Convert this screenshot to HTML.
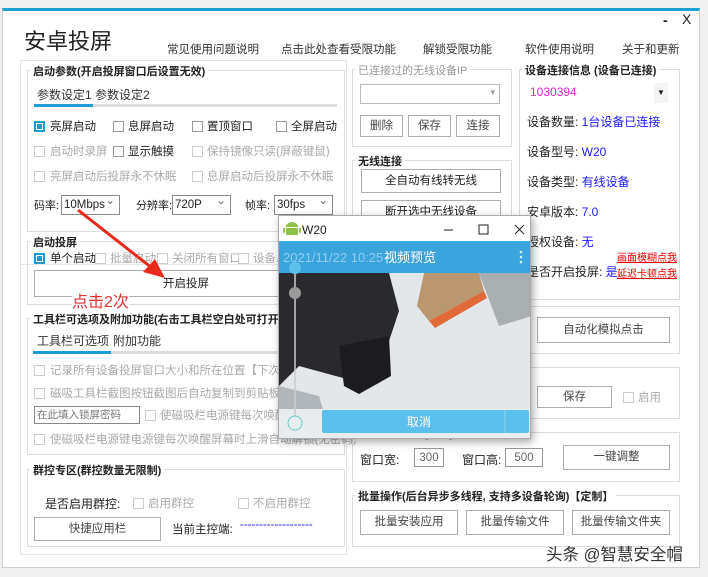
<!DOCTYPE html>
<html><head><meta charset="utf-8"><style>
*{margin:0;padding:0;box-sizing:border-box}
body{width:708px;height:577px;background:#f0f0f0;position:relative;overflow:hidden;font-family:"Liberation Sans","Noto Sans CJK SC",sans-serif;font-size:11.5px;color:#222}
.a{position:absolute;white-space:nowrap}
.win{position:absolute;left:2px;top:8px;width:698px;height:560px;background:#fff;border:1px solid #d0d0d0;border-top:3px solid #1ba1d6}
.g{position:absolute;border:1px solid #dcdcdc}
.gt{position:absolute;background:#fff;padding:0 3px;font-weight:bold;font-size:11px;color:#222;white-space:nowrap}
.cb{position:absolute;width:11px;height:11px;border:1px solid #999;background:#fff}
.cb.on{background:#1e9bd6;border:2px solid #1e9bd6;box-shadow:inset 0 0 0 1px #fff}
.cb.d{border-color:#ccc}
.gray{color:#aaa}
.btn{position:absolute;border:1px solid #adadad;background:#fff;text-align:center;color:#444}
.sel{position:absolute;border:1px solid #888;background:#fff;padding-left:2px}
.sel:after{content:"⌄";position:absolute;right:4px;top:-4px;color:#666}
.blue{color:#1a1aff}
</style></head><body>
<div class="win"></div>
<div class="a" style="left:24px;top:24px;font-size:22px;color:#222">安卓投屏</div>
<div class="a" style="left:167px;top:41px;color:#333">常见使用问题说明</div>
<div class="a" style="left:281px;top:41px;color:#333">点击此处查看受限功能</div>
<div class="a" style="left:423px;top:41px;color:#333">解锁受限功能</div>
<div class="a" style="left:525px;top:41px;color:#333">软件使用说明</div>
<div class="a" style="left:622px;top:41px;color:#333">关于和更新</div>
<div class="a" style="left:663px;top:12px;font-size:14px;font-weight:bold">-</div>
<div class="a" style="left:682px;top:11px;font-size:14px">X</div>

<div class="g" style="left:20px;top:60px;width:327px;height:205px;border-color:#e6e6e6"></div>
<div class="g" style="left:20px;top:265px;width:327px;height:290px;border-color:#e6e6e6;border-top:none"></div>

<div class="g" style="left:27px;top:70px;width:318px;height:162px"></div>
<div class="gt" style="left:30px;top:63px">启动参数(开启投屏窗口后设置无效)</div>
<div class="a" style="left:37px;top:86px;font-size:12px;color:#333">参数设定1</div>
<div class="a" style="left:95px;top:86px;font-size:12px;color:#333">参数设定2</div>
<div class="a" style="left:34px;top:104px;width:303px;height:3px;background:#ddd"></div>
<div class="a" style="left:34px;top:104px;width:59px;height:3px;background:#1e9bd6"></div>

<div class="cb on" style="left:34px;top:121px"></div><div class="a" style="left:50px;top:118px">亮屏启动</div>
<div class="cb" style="left:113px;top:121px"></div><div class="a" style="left:128px;top:118px">息屏启动</div>
<div class="cb" style="left:192px;top:121px"></div><div class="a" style="left:207px;top:118px">置顶窗口</div>
<div class="cb" style="left:276px;top:121px"></div><div class="a" style="left:291px;top:118px">全屏启动</div>
<div class="cb d" style="left:34px;top:146px"></div><div class="a gray" style="left:50px;top:143px">启动时录屏</div>
<div class="cb" style="left:113px;top:146px"></div><div class="a" style="left:128px;top:143px">显示触摸</div>
<div class="cb d" style="left:192px;top:146px"></div><div class="a gray" style="left:207px;top:143px">保持镜像只读(屏蔽键鼠)</div>
<div class="cb d" style="left:34px;top:171px"></div><div class="a gray" style="left:50px;top:168px">亮屏启动后投屏永不休眠</div>
<div class="cb d" style="left:192px;top:171px"></div><div class="a gray" style="left:207px;top:168px">息屏启动后投屏永不休眠</div>
<div class="a" style="left:34px;top:197px;font-size:11px">码率:</div>
<div class="sel" style="left:61px;top:195px;width:59px;height:20px;line-height:18px">10Mbps</div>
<div class="a" style="left:136px;top:197px;font-size:11px">分辨率:</div>
<div class="sel" style="left:172px;top:195px;width:59px;height:20px;line-height:18px">720P</div>
<div class="a" style="left:245px;top:197px;font-size:11px">帧率:</div>
<div class="sel" style="left:274px;top:195px;width:59px;height:20px;line-height:18px">30fps</div>

<div class="g" style="left:27px;top:241px;width:318px;height:64px"></div>
<div class="gt" style="left:30px;top:234px">启动投屏</div>
<div class="cb on" style="left:34px;top:253px"></div><div class="a" style="left:50px;top:250px">单个启动</div>
<div class="cb d" style="left:95px;top:253px"></div><div class="a gray" style="left:110px;top:250px">批量启动</div>
<div class="cb d" style="left:157px;top:253px"></div><div class="a gray" style="left:172px;top:250px">关闭所有窗口</div>
<div class="cb d" style="left:238px;top:253px"></div><div class="a gray" style="left:253px;top:250px">设备...</div>
<div class="btn" style="left:34px;top:270px;width:304px;height:27px;line-height:26px;color:#222">开启投屏</div>
<div class="a" style="left:72px;top:288px;font-size:16px;color:#e03030;background:#fff">点击2次</div>
<svg class="a" style="left:0;top:0" width="708" height="577"><line x1="78" y1="210" x2="152" y2="268" stroke="#e8291c" stroke-width="3"/><polygon points="165,278 143,272 155,259" fill="#e8291c"/></svg>

<div class="g" style="left:27px;top:318px;width:318px;height:137px"></div>
<div class="gt" style="left:30px;top:311px">工具栏可选项及附加功能(右击工具栏空白处可打开附加菜单)</div>
<div class="a" style="left:37px;top:332px;font-size:12px;color:#333">工具栏可选项</div>
<div class="a" style="left:113px;top:332px;font-size:12px;color:#333">附加功能</div>
<div class="a" style="left:33px;top:351px;width:304px;height:3px;background:#ddd"></div>
<div class="a" style="left:33px;top:351px;width:78px;height:3px;background:#1e9bd6"></div>
<div class="cb d" style="left:34px;top:365px"></div><div class="a gray" style="left:50px;top:362px">记录所有设备投屏窗口大小和所在位置【下次启动】</div>
<div class="cb d" style="left:34px;top:388px"></div><div class="a gray" style="left:50px;top:385px">磁吸工具栏截图按钮截图后自动复制到剪贴板(关)</div>
<div class="a gray" style="left:34px;top:406px;width:106px;height:18px;border:1px solid #888;padding-left:2px;line-height:16px;font-size:10.5px;color:#777">在此填入锁屏密码</div>
<div class="cb d" style="left:145px;top:410px"></div><div class="a gray" style="left:160px;top:407px">使磁吸栏电源键每次唤醒屏幕</div>
<div class="cb d" style="left:34px;top:434px"></div><div class="a gray" style="left:50px;top:431px">使磁吸栏电源键电源键每次唤醒屏幕时上滑自动解锁(无密码)</div>

<div class="g" style="left:27px;top:469px;width:318px;height:78px"></div>
<div class="gt" style="left:30px;top:462px">群控专区(群控数量无限制)</div>
<div class="a" style="left:45px;top:495px;font-size:12px">是否启用群控:</div>
<div class="cb d" style="left:133px;top:498px"></div><div class="a gray" style="left:148px;top:495px">启用群控</div>
<div class="cb d" style="left:238px;top:498px"></div><div class="a gray" style="left:253px;top:495px">不启用群控</div>
<div class="btn" style="left:34px;top:517px;width:127px;height:24px;line-height:22px">快捷应用栏</div>
<div class="a" style="left:172px;top:521px">当前主控端:</div>
<div class="a" style="left:240px;top:519px;color:#1a1aff">-------------------</div>

<div class="g" style="left:352px;top:69px;width:160px;height:78px"></div>
<div class="gt" style="left:355px;top:62px;font-weight:normal;color:#999">已连接过的无线设备IP</div>
<div class="a" style="left:360px;top:84px;width:140px;height:20px;border:1px solid #bbb;background:#fff"><span style="position:absolute;right:4px;top:2px;color:#999;font-size:9px">▾</span></div>
<div class="btn" style="left:360px;top:115px;width:43px;height:22px;line-height:20px">删除</div>
<div class="btn" style="left:408px;top:115px;width:43px;height:22px;line-height:20px">保存</div>
<div class="btn" style="left:456px;top:115px;width:44px;height:22px;line-height:20px">连接</div>
<div class="g" style="left:352px;top:160px;width:160px;height:80px"></div>
<div class="gt" style="left:355px;top:153px">无线连接</div>
<div class="btn" style="left:361px;top:169px;width:140px;height:24px;line-height:22px;color:#222">全自动有线转无线</div>
<div class="btn" style="left:361px;top:200px;width:140px;height:24px;line-height:22px;color:#222">断开选中无线设备</div>

<div class="g" style="left:519px;top:69px;width:161px;height:231px"></div>
<div class="gt" style="left:522px;top:62px">设备连接信息 (设备已连接)</div>
<div class="a" style="left:530px;top:85px;font-size:12px;color:#e020d0">1030394</div>
<div class="a" style="left:654px;top:83px;width:14px;height:20px;background:#f4f4f4;font-size:8px;text-align:center;line-height:20px">▼</div>
<div class="a" style="left:527px;top:113px;font-size:12px">设备数量: <span class="blue">1台设备已连接</span></div>
<div class="a" style="left:527px;top:143px;font-size:12px">设备型号: <span class="blue">W20</span></div>
<div class="a" style="left:527px;top:173px;font-size:12px">设备类型: <span class="blue">有线设备</span></div>
<div class="a" style="left:527px;top:203px;font-size:12px">安卓版本: <span class="blue">7.0</span></div>
<div class="a" style="left:527px;top:233px;font-size:12px">授权设备: <span class="blue">无</span></div>
<div class="a" style="left:617px;top:249px;font-size:10px;color:#e00;text-decoration:underline">画面模糊点我</div>
<div class="a" style="left:527px;top:263px;font-size:12px">是否开启投屏: <span class="blue">是</span></div>
<div class="a" style="left:617px;top:265px;font-size:10px;color:#e00;text-decoration:underline">延迟卡顿点我</div>

<div class="g" style="left:352px;top:306px;width:328px;height:48px"></div>
<div class="gt" style="left:355px;top:299px">自动化模拟点击</div>
<div class="btn" style="left:537px;top:317px;width:133px;height:26px;line-height:24px">自动化模拟点击</div>
<div class="g" style="left:352px;top:367px;width:328px;height:52px"></div>
<div class="gt" style="left:355px;top:360px">开机自启(自动启动)【定制】</div>
<div class="btn" style="left:537px;top:386px;width:75px;height:22px;line-height:20px">保存</div>
<div class="cb d" style="left:623px;top:392px"></div><div class="a gray" style="left:638px;top:389px">启用</div>
<div class="g" style="left:352px;top:432px;width:328px;height:50px"></div>
<div class="gt" style="left:355px;top:425px">投屏窗口大小(调整)【定制】</div>
<div class="a" style="left:360px;top:451px;font-size:12px">窗口宽:</div>
<div class="a" style="left:414px;top:448px;width:30px;height:19px;border:1px solid #999;text-align:center;line-height:19px;color:#666">300</div>
<div class="a" style="left:462px;top:451px;font-size:12px">窗口高:</div>
<div class="a" style="left:505px;top:448px;width:38px;height:19px;border:1px solid #999;text-align:center;line-height:19px;color:#666">500</div>
<div class="btn" style="left:563px;top:445px;width:107px;height:25px;line-height:23px">一键调整</div>
<div class="g" style="left:352px;top:495px;width:328px;height:52px"></div>
<div class="gt" style="left:355px;top:488px">批量操作(后台异步多线程, 支持多设备轮询)【定制】</div>
<div class="btn" style="left:360px;top:510px;width:98px;height:25px;line-height:23px">批量安装应用</div>
<div class="btn" style="left:466px;top:510px;width:98px;height:25px;line-height:23px">批量传输文件</div>
<div class="btn" style="left:572px;top:510px;width:98px;height:25px;line-height:23px">批量传输文件夹</div>
<div class="a" style="left:546px;top:541px;font-size:16.5px;color:#333;text-shadow:0 0 2px #fff">头条 @智慧安全帽</div>

<div class="a" style="left:278px;top:215px;width:253px;height:224px;background:#fff;border:1px solid #aaa;box-shadow:2px 3px 8px rgba(0,0,0,.35);overflow:hidden">
<svg width="253" height="224" style="position:absolute;left:0;top:0">
<path d="M7 11a6 5 0 0 1 12 0z" fill="#8bc34a"/>
<rect x="7" y="12" width="12" height="7" rx="1" fill="#8bc34a"/>
<rect x="4" y="12" width="2" height="5" rx="1" fill="#8bc34a"/><rect x="20" y="12" width="2" height="5" rx="1" fill="#8bc34a"/>
<text x="23" y="18" font-size="12" font-family="Liberation Sans" fill="#222">W20</text>
<line x1="165" y1="14" x2="174" y2="14" stroke="#222"/>
<rect x="200" y="9" width="9" height="9" fill="none" stroke="#222"/>
<path d="M236 9l9 9M245 9l-9 9" stroke="#222"/>
<rect x="0" y="57" width="253" height="140" fill="#e4e7ea"/>
<polygon points="0,57 110,57 120,95 105,140 75,165 20,150 0,170" fill="#2a2a2e"/>
<polygon points="60,130 110,120 112,160 80,178 65,170" fill="#1c1c1f"/>
<polygon points="145,57 200,57 205,75 150,105 138,90" fill="#b99870"/>
<polygon points="150,105 205,75 208,82 156,112" fill="#e06a3a"/>
<polygon points="200,57 253,57 253,100 220,110" fill="#a9aeb0"/>
<polygon points="0,170 40,180 45,197 0,197" fill="#b0b6ba"/>
<rect x="0" y="25" width="253" height="32" fill="#3aa4dc"/>
<text x="4" y="46" font-size="13" font-family="Liberation Sans" fill="#8fcdf0">2021/11/22 10:25</text>
<text x="105" y="46" font-size="13" font-family="Noto Sans CJK SC" fill="#fff">视频预览</text>
<circle cx="242" cy="36" r="1.3" fill="#cfe"/><circle cx="242" cy="41" r="1.3" fill="#cfe"/><circle cx="242" cy="46" r="1.3" fill="#cfe"/>
<rect x="0" y="193" width="253" height="31" fill="#e9ecee"/>
<line x1="16" y1="52" x2="16" y2="200" stroke="#ccc" stroke-width="1.5"/>
<circle cx="16" cy="52" r="6" fill="#5bc0eb"/>
<circle cx="16" cy="77" r="6" fill="#999"/>
<circle cx="16" cy="207" r="7" fill="none" stroke="#6cc"/>
<rect x="43" y="194" width="207" height="23" rx="2" fill="#5bc0eb"/>
<line x1="226" y1="194" x2="226" y2="217" stroke="#8fd2f0"/>
<text x="128" y="210" font-size="12" font-family="Noto Sans CJK SC" fill="#fff">取消</text>
</svg>
</div>
</body></html>
